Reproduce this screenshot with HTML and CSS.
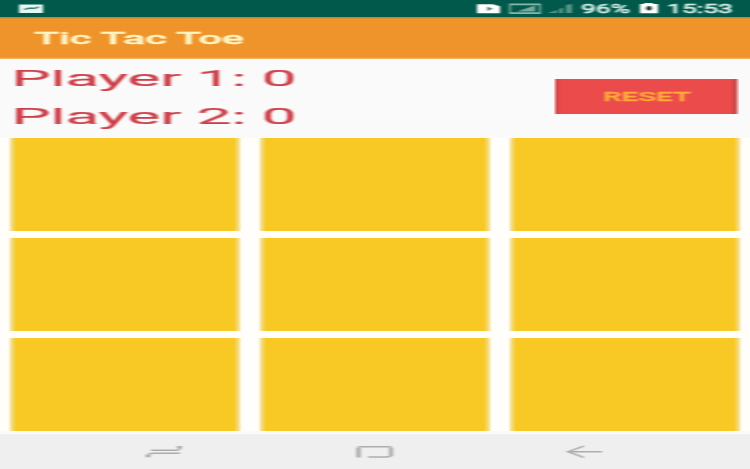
FILE: index.html
```
<!DOCTYPE html>
<html lang="en">
<head>
<meta charset="utf-8">
<title>Tic Tac Toe</title>
<link rel="stylesheet" href="styles.css">
</head>
<body>
<svg class="defs" width="0" height="0" aria-hidden="true">
  <filter id="soft" x="-10%" y="-20%" width="120%" height="140%"><feGaussianBlur stdDeviation="1.4 0.6"/></filter>
</svg>
<div class="screen">
  <header class="status">
    <svg class="strip" viewBox="0 0 750 17">
      <g filter="url(#soft)">
        <rect x="19" y="4.500" width="24" height="8.500" fill="#e4f8f4"/>
        <path d="M24 9.500l6-1.500 4 .5 5-1.500" fill="none" stroke="#3c7d6e" stroke-width="1.700"/>
        <path d="M477 4.300h16l7 2v7h-23z" fill="#ffffff"/>
        <path d="M487 6.500l6 2.200-6 2.200z" fill="#2f7566"/>
        <path d="M510 4.300h30v8.900h-30z" fill="none" stroke="#86b8ac" stroke-width="1.800"/>
        <path d="M517 11.500l18-6v6z" fill="#77aa9e"/>
        <path d="M548 13l9-3v3zM559 13v-4l4-1.200v5.200zM566 13V5l6-1V13z" fill="#579486"/>
        <path d="M640 4h4V3h9v1h5v9.300h-18z" fill="#ffffff"/>
        <ellipse cx="649" cy="8.300" rx="3.300" ry="2.200" fill="#0c2c25"/>
        <text class="status-text" x="581" y="13.300" textLength="49" lengthAdjust="spacingAndGlyphs">96%</text>
        <text class="status-text" x="667" y="13.300" textLength="66" lengthAdjust="spacingAndGlyphs">15:53</text>
      </g>
    </svg>
  </header>
  <div class="appbar">
    <svg class="title" viewBox="0 0 220 30"><text x="4" y="20" textLength="210" lengthAdjust="spacingAndGlyphs" filter="url(#soft)">Tic Tac Toe</text></svg>
  </div>
  <section class="scores">
    <div class="players">
      <svg class="player" viewBox="0 0 300 38"><text x="11.500" y="27" textLength="285" lengthAdjust="spacingAndGlyphs" filter="url(#soft)">Player 1: 0</text></svg>
      <svg class="player" viewBox="0 0 300 38"><text x="11.500" y="27" textLength="285" lengthAdjust="spacingAndGlyphs" filter="url(#soft)">Player 2: 0</text></svg>
    </div>
    <button class="reset" type="button">
      <svg viewBox="0 0 100 20"><text x="6" y="14" textLength="88" lengthAdjust="spacingAndGlyphs" filter="url(#soft)">RESET</text></svg>
    </button>
  </section>
  <main class="board">
    <div class="cell"></div><div class="cell"></div><div class="cell"></div>
    <div class="cell"></div><div class="cell"></div><div class="cell"></div>
    <div class="cell"></div><div class="cell"></div><div class="cell"></div>
  </main>
  <nav class="nav">
    <svg class="nav-icon" viewBox="0 0 44 20"><g filter="url(#soft)"><path d="M9 8.200H34q4 0 4.500-2.500M38 11.300H12q-6 0-7 2.500"/><path d="M3.500 14h5M35 5.300h5" stroke-width="2.500"/></g></svg>
    <svg class="nav-icon" viewBox="0 0 44 20"><g filter="url(#soft)"><path d="M5.500 15.500V5.500" stroke-width="4.500"/><path d="M5 4.700H36q3 0 3 2V12q0 3-6 3H15"/><path d="M38 6v8" stroke-width="4"/></g></svg>
    <svg class="nav-icon" viewBox="0 0 44 20"><g filter="url(#soft)"><path d="M39 9.700H5M21 4L5 9.700 21 15.500"/></g></svg>
  </nav>
</div>
</body>
</html>
```
FILE: styles.css
```
* { box-sizing: border-box; }
body {
  margin: 0;
  font-family: Roboto, "Liberation Sans", sans-serif;
}
svg { display: block; }
.defs { position: absolute; }
.screen {
  display: flex;
  flex-direction: column;
  width: 750px;
  height: 469px;
  overflow: hidden;
  background: #fafafa;
}
.status {
  height: 17px;
  background: #01594b;
}
.strip { width: 750px; height: 17px; }
.status-text {
  font-size: 12.5px;
  fill: #d3eee8;
  stroke: #d3eee8;
  stroke-width: 0.5px;
}
.appbar {
  height: 42px;
  padding: 7px 0 0 30px;
  background: linear-gradient(#b4822d 0, #ef932b 2px, #ef932b 40px, #f5b977 42px);
}
.title {
  width: 220px;
  height: 30px;
  font-size: 16px;
  font-weight: 500;
  fill: #fff5c4;
  stroke: #fff5c4;
  stroke-width: 0.4px;
}
.scores {
  display: flex;
  justify-content: space-between;
  align-items: flex-start;
  height: 79px;
  padding-right: 11px;
}
.player {
  width: 300px;
  height: 38px;
  font-size: 22.5px;
  fill: #cd3f4a;
  stroke: #cd3f4a;
  stroke-width: 0.2px;
}
.reset {
  display: flex;
  align-items: center;
  justify-content: center;
  width: 185px;
  height: 35px;
  margin-top: 20px;
  padding: 0;
  border: 0;
  background: linear-gradient(90deg, #f9d5d5 0, #d3474a 3px, #eb4b4b 8px, #eb4b4b 176px, #c8474a 181px, #f9d5d5 185px);
  font-family: inherit;
}
.reset svg {
  width: 100px;
  height: 20px;
  font-size: 12px;
  font-weight: 500;
  fill: #ffac38;
  stroke: #ffac38;
  stroke-width: 0.3px;
}
.board {
  display: grid;
  grid-template-columns: repeat(3, 1fr);
  grid-template-rows: repeat(3, 1fr);
  gap: 7px 16px;
  height: 293px;
  padding: 0 8px;
  background: #fffefa;
}
.cell {
  background: linear-gradient(90deg, #fffefa 0, #f3da7c 4px, #f8c925 8px, #f8c925 calc(100% - 8px), #f3da7c calc(100% - 4px), #fffefa 100%);
}
.nav {
  display: flex;
  justify-content: space-between;
  flex: 1;
  margin-top: 3px;
  padding: 8px 143px 0 142px;
  background: #efefef;
}
.nav-icon {
  width: 44px;
  height: 20px;
  fill: none;
  stroke: #adadad;
  stroke-width: 1.6;
}
```
